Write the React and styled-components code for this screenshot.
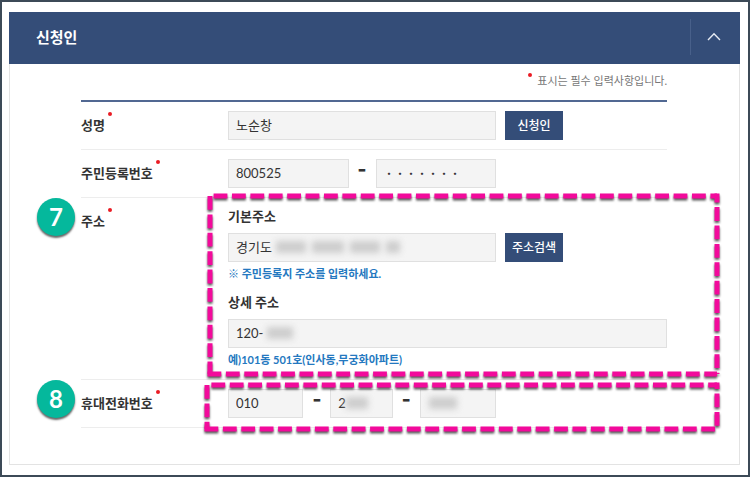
import React, { useState } from 'react';
import styled, { createGlobalStyle } from 'styled-components';

const GlobalStyle = createGlobalStyle`
  * {
    box-sizing: border-box;
  }

  body {
    margin: 0;
    background: #fff;
    color: #333;
    font-family: Lato, "Noto Sans CJK KR", sans-serif;
    font-size: 13px;
  }

  input, button {
    font-family: inherit;
  }
`;

const Page = styled.main`
  min-height: 100vh;
  padding: 10px 8px 10px 7px;
  border: 2px solid #3c4a57;
`;

const Card = styled.section`
  background: #fff;
`;

const CardHeader = styled.header`
  display: flex;
  align-items: center;
  justify-content: space-between;
  height: 52px;
  padding: 0 0 2px 27px;
  background: #344d78;
  color: #fff;
`;

const Title = styled.h2`
  margin: 0;
  font-size: 15px;
  line-height: 24px;
  font-weight: 700;
`;

const ToggleButton = styled.button`
  display: flex;
  align-items: center;
  justify-content: center;
  width: 50px;
  height: 36px;
  padding: 0 4px 2px 0;
  border: none;
  border-left: 1px solid #48608a;
  background: none;
  color: #e6ebf3;
  cursor: pointer;
`;

const CardBody = styled.div`
  padding: 8px 72px 36px 71px;
  border: 1px solid #e3e3e3;
  border-width: 0 1px 1px;
`;

const Notice = styled.p`
  display: flex;
  justify-content: flex-end;
  gap: 5px;
  margin: 0 0 10px;
  color: #777;
  font-size: 11px;
  line-height: 18px;
`;

const RequiredDot = styled.span`
  flex: none;
  width: 4px;
  height: 4px;
  margin-top: 1px;
  border-radius: 50%;
  background: #ea1c24;
`;

const Rows = styled.form`
  border-top: 2px solid #516892;
`;

const Row = styled.div`
  position: relative;
  display: grid;
  grid-template-columns: 147px 1fr;
  padding: 9px 0 ${props => (props.$stacked ? 0 : 9)}px;
  border-bottom: 1px solid #ededed;
`;

const RowLabel = styled.label`
  display: flex;
  align-items: flex-start;
  gap: 3px;
  font-weight: 700;
  line-height: 29px;
`;

const SubLabel = styled.label`
  display: block;
  margin-bottom: 8px;
  font-weight: 700;
  line-height: 18px;
`;

const Hint = styled.p`
  margin: 4px 0 11px;
  color: #2478c0;
  font-size: 11px;
  font-weight: 700;
  line-height: 16px;
`;

const Line = styled.div`
  display: flex;
  gap: 9px;
`;

const Group = styled.div`
  display: flex;
  flex: 0 1 268px;
  min-width: 0;
`;

const Field = styled.div`
  position: relative;
  flex: ${props => props.$grow || 1} 1 0;
  min-width: 0;
`;

const Input = styled.input`
  display: block;
  width: 100%;
  height: 29px;
  padding: 0 7px 2px;
  border: 1px solid #e0e0e0;
  border-radius: 0;
  background: #f4f4f4;
  color: #333;
  font-size: 13px;
`;

const MaskedInput = styled(Input)`
  font-family: "Noto Sans CJK KR", sans-serif;
  font-size: 11px;
`;

const Dash = styled.span`
  flex: none;
  width: 27px;
  color: #333;
  font-family: "Noto Sans CJK KR", sans-serif;
  font-size: 24px;
  font-weight: 700;
  line-height: 16px;
  text-align: center;
`;

const NavyButton = styled.button`
  width: 58px;
  height: 29px;
  padding: 0 0 2px;
  border: none;
  background: #344d78;
  color: #fff;
  font-size: 12px;
  font-weight: 500;
  cursor: pointer;
`;

const Smudge = styled.span`
  position: absolute;
  top: 8px;
  left: ${props => props.$left}px;
  display: flex;
  gap: 6px;
  filter: blur(3px);
  pointer-events: none;
`;

const SmudgeWord = styled.i`
  width: ${props => props.$width}px;
  height: 12px;
  background: #cdcdcd;
`;

const StepBadge = styled.span`
  position: absolute;
  top: 0;
  left: -44px;
  width: 38px;
  height: 38px;
  border-radius: 50%;
  background: #05b89c;
  box-shadow: 0 2px 2px rgba(0, 0, 0, 0.6);
  color: #fff;
  font-size: 24px;
  font-weight: 700;
  line-height: 38px;
  text-align: center;
`;

const HighlightBox = styled.div`
  position: absolute;
  top: ${props => props.$top}px;
  right: -50px;
  bottom: ${props => props.$bottom}px;
  left: ${props => props.$left}px;
  pointer-events: none;

  svg {
    display: block;
    width: 100%;
    height: 100%;
    overflow: visible;
    filter: drop-shadow(0 2px 1px rgba(0, 0, 0, 0.65));
  }
`;

// offsets: where the dash pattern starts on the top, right, bottom and left sides
const Highlight = ({ top, bottom, left, offsets }) => (
  <HighlightBox $top={top} $bottom={bottom} $left={left}>
    <svg aria-hidden="true" stroke="#f20a9b" strokeWidth="5" strokeDasharray="13.8 4.6">
      <line x1="0" y1="0" x2="100%" y2="0" strokeDashoffset={offsets[0]} />
      <line x1="100%" y1="-2.5" x2="100%" y2="100%" strokeDashoffset={offsets[1]} />
      <line x1="-2.5" y1="100%" x2="100%" y2="100%" strokeDashoffset={offsets[2]} />
      <line x1="0" y1="0" x2="0" y2="100%" strokeDashoffset={offsets[3]} />
    </svg>
  </HighlightBox>
);

const Redacted = ({ left, words }) => (
  <Smudge $left={left} aria-hidden="true">
    {words.map((width, i) => (
      <SmudgeWord key={i} $width={width} />
    ))}
  </Smudge>
);

const App = () => {
  const [open, setOpen] = useState(true);
  const [formData, setFormData] = useState({
    name: '노순창',
    birth: '800525',
    idBack: '・・・・・・・',
    address: '경기도',
    detail: '120-',
    phone1: '010',
    phone2: '2',
    phone3: ''
  });

  const handleChange = (e) => {
    setFormData({
      ...formData,
      [e.target.name]: e.target.value
    });
  };

  const bind = (name) => ({
    id: name,
    name,
    value: formData[name],
    onChange: handleChange
  });

  return (
    <Page>
      <GlobalStyle />
      <Card>
        <CardHeader>
          <Title>신청인</Title>
          <ToggleButton
            type="button"
            aria-label="신청인"
            aria-expanded={open}
            onClick={() => setOpen(!open)}
          >
            <svg width="14" height="9" viewBox="0 0 14 9" fill="none" stroke="currentColor" strokeWidth="1.4">
              <path d={open ? 'M1 8 7 1.8 13 8' : 'M1 1 7 7.2 13 1'} />
            </svg>
          </ToggleButton>
        </CardHeader>
        {open && (
          <CardBody>
            <Notice>
              <RequiredDot />
              표시는 필수 입력사항입니다.
            </Notice>
            <Rows onSubmit={(e) => e.preventDefault()}>
              <Row>
                <RowLabel htmlFor="name">성명<RequiredDot /></RowLabel>
                <Line>
                  <Group>
                    <Field><Input type="text" {...bind('name')} /></Field>
                  </Group>
                  <NavyButton type="button">신청인</NavyButton>
                </Line>
              </Row>
              <Row>
                <RowLabel htmlFor="birth">주민등록번호<RequiredDot /></RowLabel>
                <Line>
                  <Group>
                    <Field><Input type="text" {...bind('birth')} /></Field>
                    <Dash>-</Dash>
                    <Field>
                      <MaskedInput type="text" readOnly aria-label="주민등록번호" {...bind('idBack')} />
                    </Field>
                  </Group>
                </Line>
              </Row>
              <Row $stacked>
                <StepBadge>7</StepBadge>
                <RowLabel htmlFor="address">주소<RequiredDot /></RowLabel>
                <div>
                  <SubLabel htmlFor="address">기본주소</SubLabel>
                  <Line>
                    <Group>
                      <Field>
                        <Input type="text" {...bind('address')} />
                        <Redacted left={48} words={[30, 32, 30, 14]} />
                      </Field>
                    </Group>
                    <NavyButton type="button">주소검색</NavyButton>
                  </Line>
                  <Hint>※ 주민등록지 주소를 입력하세요.</Hint>
                  <SubLabel htmlFor="detail">상세 주소</SubLabel>
                  <Field>
                    <Input type="text" {...bind('detail')} />
                    <Redacted left={39} words={[26]} />
                  </Field>
                  <Hint>예)101동 501호(인사동,무궁화아파트)</Hint>
                </div>
                <Highlight top={-2} bottom={5} left={129} offsets={[14.8, 4.8, 0, 0]} />
              </Row>
              <Row>
                <StepBadge>8</StepBadge>
                <RowLabel htmlFor="phone1">휴대전화번호<RequiredDot /></RowLabel>
                <Line>
                  <Group>
                    <Field $grow={75}><Input type="text" {...bind('phone1')} /></Field>
                    <Dash>-</Dash>
                    <Field $grow={62}>
                      <Input type="text" aria-label="휴대전화번호" {...bind('phone2')} />
                      <Redacted left={16} words={[22]} />
                    </Field>
                    <Dash>-</Dash>
                    <Field $grow={76}>
                      <Input type="text" aria-label="휴대전화번호" {...bind('phone3')} />
                      <Redacted left={9} words={[28]} />
                    </Field>
                  </Group>
                </Line>
                <Highlight top={5} bottom={-2} left={126} offsets={[14, 7.4, 0, 0]} />
              </Row>
            </Rows>
          </CardBody>
        )}
      </Card>
    </Page>
  );
};

export default App;
